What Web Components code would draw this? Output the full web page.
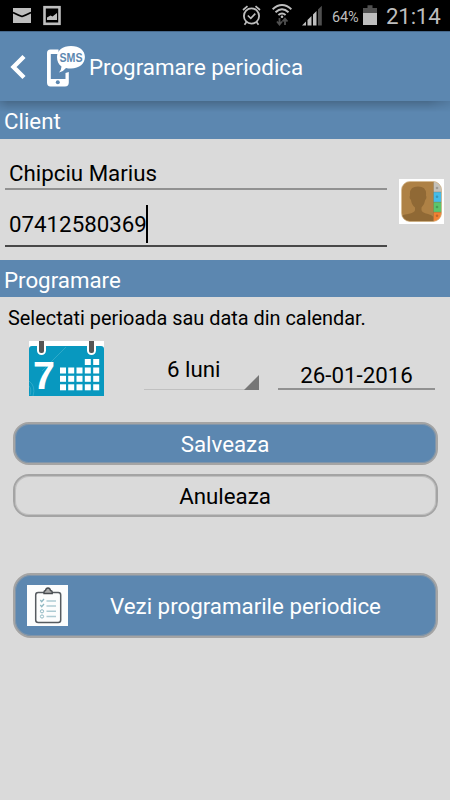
<!DOCTYPE html>
<html lang="ro">
<head>
<meta charset="utf-8">
<title>Programare periodica</title>
<style>
  body {
    margin: 0;
    background: #dadada;
    font-family: Roboto, "Liberation Sans", sans-serif;
    font-size: 22.3px;
    color: #000;
    --blue: #5c87b0;
  }
</style>
</head>
<body>
<appointment-screen></appointment-screen>

<script>
class StatusBar extends HTMLElement {
  constructor() {
    super();
    this.attachShadow({ mode: "open" });
  }

  connectedCallback() {
    this.shadowRoot.innerHTML = `
      <style>
        :host {
          display: flex;
          align-items: center;
          height: 31px;
          box-sizing: border-box;
          padding: 0 9px 0 13px;
          background: #000;
          color: #bebebe;
        }
        svg { display: block; flex: none; }
        .spacer { flex: 1; }
        .image { margin-left: 12px; }
        .wifi { margin-left: 11px; }
        .signal { margin-left: 10px; }
        .percent { width: 28px; margin: 3px 0 0 10px; font-size: 14.5px; letter-spacing: -0.1px; white-space: nowrap; }
        .battery { margin-left: 3px; }
        .clock { width: 55px; margin: 1px 0 0 9px; font-size: 22.3px; letter-spacing: -0.2px; white-space: nowrap; }
      </style>
      <svg width="18" height="31" viewBox="0 0 18 31">
        <rect y="8" width="18" height="15" fill="#bebebe"/>
        <path d="M0 12.5 Q5 15 9 16.5 Q13 15 18 12.5" fill="none" stroke="#000" stroke-width="1.6"/>
      </svg>
      <svg class="image" width="19" height="31" viewBox="0 0 19 31">
        <rect x="1.5" y="7.2" width="15" height="16.6" fill="none" stroke="#bebebe" stroke-width="2.6"/>
        <path d="M4 20V17.5L7.5 15.5 9.5 16.5 14 13V20Z" fill="#bebebe"/>
      </svg>
      <span class="spacer"></span>
      <svg width="19" height="31" viewBox="0 0 19 31" fill="none" stroke="#bebebe">
        <circle cx="9.5" cy="16" r="7.6" stroke-width="1.8"/>
        <path d="M1 10 5.5 6.2M13.5 6.2 18 10M4.5 22 2.5 24.7M14.5 22 16.5 24.7" stroke-width="1.7"/>
        <path d="M5.8 15.5 8.8 18.4 13.3 13.6" stroke-width="1.6"/>
      </svg>
      <svg class="wifi" width="20" height="31" viewBox="0 0 20 31" fill="none" stroke="#bebebe" stroke-width="2">
        <path d="M.6 9.2Q10 .8 19.4 9.2M3.5 12.2Q10 6.4 16.5 12.2M6.4 15.1Q10 12 13.6 15.1"/>
        <circle cx="10" cy="16.8" r="1.3" fill="#bebebe" stroke="none"/>
        <path d="M7.5 18V24M5 21.5 7.5 24.5 10 21.5M13 25V19M10.5 21.5 13 18.7 15.5 21.5" stroke="#505050" stroke-width="1.8"/>
      </svg>
      <svg class="signal" width="20" height="31" viewBox="0 0 20 31">
        <path d="M0 25.5 4 21.5V25.5ZM5.5 20 9.5 16V25.5H5.5ZM11 14.5 14.5 11V25.5H11Z" fill="#bebebe"/>
        <path d="M16 9.5 19.8 5.8V25.5H16Z" fill="#505050"/>
      </svg>
      <span class="percent">64%</span>
      <svg class="battery" width="14" height="31" viewBox="0 0 14 31">
        <path d="M0 8H4.5V5.2H9.5V8H14V13H0Z" fill="#505050"/>
        <rect y="13" width="14" height="12" fill="#bebebe"/>
      </svg>
      <span class="clock">21:14</span>
    `;
  }
}

class AppBar extends HTMLElement {
  constructor() {
    super();
    this.attachShadow({ mode: "open" });
  }

  connectedCallback() {
    this.shadowRoot.innerHTML = `
      <style>
        :host {
          display: flex;
          align-items: center;
          position: relative;
          height: 70px;
          box-sizing: border-box;
          padding: 0 0 0 10px;
          background: var(--blue);
          color: #fff;
          border-top: 1px solid #47698c;
        }
        /* drop shadow over the first section */
        :host::after {
          content: "";
          position: absolute;
          top: 100%;
          left: 0;
          right: 0;
          height: 11px;
          background: linear-gradient(rgb(0 0 0 / 0.21), rgb(0 0 0 / 0.1) 50%, transparent);
          -webkit-mask: linear-gradient(90deg, rgb(0 0 0 / 0.6), #000 8px, #000 calc(100% - 22px), rgb(0 0 0 / 0.4));
        }
        svg { display: block; flex: none; }
        .logo { margin-left: 8px; overflow: visible; }
        .title { margin-top: 1px; line-height: 30px; white-space: nowrap; }
      </style>
      <svg width="17" height="69" viewBox="0 0 17 69">
        <path d="M14 24.5 3.5 35 14 45.5" fill="none" stroke="#fff" stroke-width="4.4"/>
      </svg>
      <svg class="logo" width="54" height="69" viewBox="35.5 32 54 69">
        <path d="M59 49.5H51Q47.5 49.5 47.5 53V82.5Q47.5 86.5 51 86.5H65.5Q69.3 86.5 69.3 82.5V72L66 73V79H51.3V54H59Z" fill="#fff"/>
        <circle cx="58.3" cy="82.3" r="2" fill="#5c87b0"/>
        <path d="M71.5 46C80 46 85.4 50.5 85.4 57S80 68.5 71.5 68.5Q68.5 68.5 66.5 68 64 71.5 59.5 72.5 62 69.5 62 66.5C59 64.5 57.5 61 57.5 57 57.5 50.5 63 46 71.5 46Z" fill="#fff"/>
        <text x="60" y="61.5" font-family="Liberation Sans, sans-serif" font-size="12.5" font-weight="bold" textLength="23" lengthAdjust="spacingAndGlyphs" fill="#5c87b0">SMS</text>
      </svg>
      <span class="title"><slot></slot></span>
    `;
  }
}

class SectionTitle extends HTMLElement {
  constructor() {
    super();
    this.attachShadow({ mode: "open" });
  }

  connectedCallback() {
    this.shadowRoot.innerHTML = `
      <style>
        :host {
          display: block;
          height: 38px;
          box-sizing: border-box;
          padding-left: 4px;
          line-height: 40px;
          background: var(--blue);
          color: #fff;
        }
      </style>
      <slot></slot>
    `;
  }
}

class TextField extends HTMLElement {
  constructor() {
    super();
    this.attachShadow({ mode: "open" });
  }

  connectedCallback() {
    const focused = this.hasAttribute("focused");

    this.shadowRoot.innerHTML = `
      <style>
        :host {
          display: flex;
          align-items: center;
          box-sizing: border-box;
          padding-left: 4px;
          border-bottom: 2px solid ${focused ? "#484848" : "#919191"};
          white-space: nowrap;
        }
        :host([centered]) { justify-content: center; padding: 0; }
        .caret { width: 2px; height: 38px; margin-left: -1px; background: #000; }
      </style>
      <slot></slot>${focused ? `<span class="caret"></span>` : ""}
    `;
  }
}

class PeriodSpinner extends HTMLElement {
  constructor() {
    super();
    this.attachShadow({ mode: "open" });
  }

  connectedCallback() {
    this.shadowRoot.innerHTML = `
      <style>
        :host {
          display: flex;
          align-items: flex-end;
          justify-content: space-between;
          box-sizing: border-box;
          padding-left: 23px;
          border-bottom: 1px solid #c0c0c0;
        }
        .value { line-height: 40px; white-space: nowrap; }
        svg { display: block; margin-bottom: -1px; }
      </style>
      <span class="value"><slot></slot></span>
      <svg width="15" height="15"><path d="M15 0V15H0Z" fill="#777"/></svg>
    `;
  }
}

class RoundButton extends HTMLElement {
  constructor() {
    super();
    this.attachShadow({ mode: "open" });
  }

  connectedCallback() {
    this.shadowRoot.innerHTML = `
      <style>
        :host {
          display: flex;
          align-items: center;
          box-sizing: border-box;
          height: 43px;
          border: 2px solid #a4a4a4;
          border-radius: 16px;
          box-shadow: inset 0 0 0 1px rgb(164 164 164 / 0.5);
        }
        :host([primary]) { background: var(--blue); color: #fff; }
        :host([large]) { height: 65px; border-radius: 18px; padding: 0 12px; }
        .label { flex: 1; text-align: center; white-space: nowrap; }
      </style>
      <slot name="icon"></slot>
      <span class="label"><slot></slot></span>
    `;
  }
}

class ContactIcon extends HTMLElement {
  constructor() {
    super();
    this.attachShadow({ mode: "open" });
  }

  connectedCallback() {
    this.shadowRoot.innerHTML = `
      <style>
        :host { display: block; width: 45px; height: 45px; background: #fff; }
        svg { display: block; }
      </style>
      <svg width="45" height="45" viewBox="0 0 45 45">
        <clipPath id="book"><rect x="2.5" y="2.5" width="40" height="40" rx="8.5"/></clipPath>
        <g clip-path="url(#book)">
          <rect width="45" height="45" fill="#ae8145"/>
          <path d="M0 45V38Q3 36 9 35 16 33.5 16 31V28.5Q12.5 26 12 21 9.8 19 11 16.5 10 7.5 19 7.5 28 7.5 27 16.5 28.2 19 26.2 21 25.5 26 22.5 28.5V31Q22.5 33.5 29 35 33 36 34.5 38V45Z" fill="#906935"/>
          <rect x="34.5" width="10.5" height="13" fill="#c4c1ba"/>
          <rect x="34.5" y="13" width="10.5" height="10.2" fill="#45bce8"/>
          <rect x="34.5" y="23.2" width="10.5" height="10" fill="#5bc56c"/>
          <rect x="34.5" y="33.2" width="10.5" height="11.8" fill="#f28133"/>
          <path d="M34.5 0V45M34.5 13H45M34.5 23.2H45M34.5 33.2H45" stroke="#806945" stroke-opacity=".4" stroke-width=".8"/>
          <g fill="#000" fill-opacity=".2">
            <circle cx="38" cy="9" r="1.3"/><circle cx="38" cy="17.8" r="1.3"/>
            <circle cx="38" cy="28" r="1.3"/><circle cx="38" cy="36.8" r="1.3"/>
          </g>
        </g>
        <rect x="2.5" y="2.5" width="40" height="40" rx="8.5" fill="none" stroke="#d6b98c" stroke-width=".7"/>
      </svg>
    `;
  }
}

class CalendarIcon extends HTMLElement {
  constructor() {
    super();
    this.attachShadow({ mode: "open" });
  }

  connectedCallback() {
    // day squares: two in the first row, then three full rows
    let days = "";
    [18, 26.5, 34.8, 43.3].forEach((y, row) => {
      [31, 39.2, 47.5, 55.8, 64.2].forEach((x, col) => {
        if (row > 0 || col > 2) {
          days += `<rect x="${x}" y="${y}" width="6" height="6"/>`;
        }
      });
    });

    this.shadowRoot.innerHTML = `
      <style>
        :host { display: block; width: 75px; height: 55px; background: #fff; }
        svg { display: block; }
      </style>
      <svg width="75" height="55" viewBox="0 0 75 55">
        <path d="M0 8Q0 5 3 5H72Q75 5 75 8V55H0Z" fill="#0898bf"/>
        <path d="M37 6 13 30M0 40Q7 45 4 55M0 45Q3 48 1 54" fill="none" stroke="#4ab5d0" stroke-opacity=".6"/>
        <rect x="8" y="-5" width="9" height="19" rx="4.5" fill="#fff"/>
        <rect x="58" y="-5" width="9" height="19" rx="4.5" fill="#fff"/>
        <rect x="10" y="-4" width="5" height="16" rx="2" fill="#555"/>
        <rect x="60" y="-4" width="5" height="16" rx="2" fill="#555"/>
        <text x="4" y="48" font-family="Liberation Sans, sans-serif" font-size="39" font-weight="bold" textLength="22" lengthAdjust="spacingAndGlyphs" fill="#fff">7</text>
        <g fill="#fff">${days}</g>
      </svg>
    `;
  }
}

class ClipboardIcon extends HTMLElement {
  constructor() {
    super();
    this.attachShadow({ mode: "open" });
  }

  connectedCallback() {
    this.shadowRoot.innerHTML = `
      <style>
        :host { display: block; width: 41px; height: 41px; background: #fcfdfd; }
        svg { display: block; }
      </style>
      <svg width="41" height="41" viewBox="0 0 41 41" fill="none">
        <rect x="8.7" y="7.5" width="25" height="30" rx="2.5" stroke="#565b60" stroke-width="1.5"/>
        <path d="M17 8.5V7Q17 5.8 18.5 5.5 19 3 21 3T23.5 5.5Q25.2 5.8 25.2 7V8.5Z" fill="#aaa" stroke="#484c50" stroke-width="1.4"/>
        <path d="M19.5 16H29M19.5 21H29M19.5 26.3H29M19.5 31.5H29" stroke="#adcbd3" stroke-width="1.4"/>
        <path d="M13.3 15 14.7 16.7 17 14M13.3 20 14.7 21.7 17 19" stroke="#8fb8c2" stroke-width="1.3"/>
        <circle cx="15" cy="26.3" r="1.6" stroke="#8fb8c2"/>
        <circle cx="15" cy="31.5" r="1.6" stroke="#8fb8c2"/>
      </svg>
    `;
  }
}

class AppointmentScreen extends HTMLElement {
  constructor() {
    super();
    this.attachShadow({ mode: "open" });
  }

  connectedCallback() {
    this.shadowRoot.innerHTML = `
      <style>
        :host { display: block; height: 800px; overflow: hidden; }
        .client {
          display: flex;
          align-items: center;
          justify-content: space-between;
          height: 121px;
          box-sizing: border-box;
          padding: 3px 6px 0 5px;
        }
        .fields { width: 382px; height: 121px; margin-top: -3px; }
        .name { height: 51px; padding-top: 18px; }
        .phone { height: 57px; padding-top: 13px; }
        .schedule { height: 37px; }
        .hint {
          margin: 0;
          padding-left: 8px;
          height: 44px;
          line-height: 44px;
          font-size: 19.9px;
          white-space: nowrap;
        }
        .period { display: flex; height: 55px; padding-left: 29px; }
        period-spinner { width: 115px; height: 49px; margin-left: 40px; }
        .date { width: 157px; height: 49px; margin-left: 19px; padding-top: 21px; }
        .buttons { display: grid; gap: 9px; padding: 26px 12.5px 0; }
        .list { margin: 56px 12.5px 0; }
      </style>
      <status-bar></status-bar>
      <app-bar>Programare periodica</app-bar>
      <section-title>Client</section-title>
      <div class="client">
        <div class="fields">
          <text-field class="name">Chipciu Marius</text-field>
          <text-field class="phone" focused>07412580369</text-field>
        </div>
        <contact-icon></contact-icon>
      </div>
      <section-title class="schedule">Programare</section-title>
      <p class="hint">Selectati perioada sau data din calendar.</p>
      <div class="period">
        <calendar-icon></calendar-icon>
        <period-spinner>6 luni</period-spinner>
        <text-field class="date" centered>26-01-2016</text-field>
      </div>
      <div class="buttons">
        <round-button primary>Salveaza</round-button>
        <round-button>Anuleaza</round-button>
      </div>
      <round-button class="list" primary large>
        <clipboard-icon slot="icon"></clipboard-icon>
        Vezi programarile periodice
      </round-button>
    `;
  }
}

customElements.define("status-bar", StatusBar);
customElements.define("app-bar", AppBar);
customElements.define("section-title", SectionTitle);
customElements.define("text-field", TextField);
customElements.define("period-spinner", PeriodSpinner);
customElements.define("round-button", RoundButton);
customElements.define("contact-icon", ContactIcon);
customElements.define("calendar-icon", CalendarIcon);
customElements.define("clipboard-icon", ClipboardIcon);
customElements.define("appointment-screen", AppointmentScreen);
</script>
</body>
</html>
